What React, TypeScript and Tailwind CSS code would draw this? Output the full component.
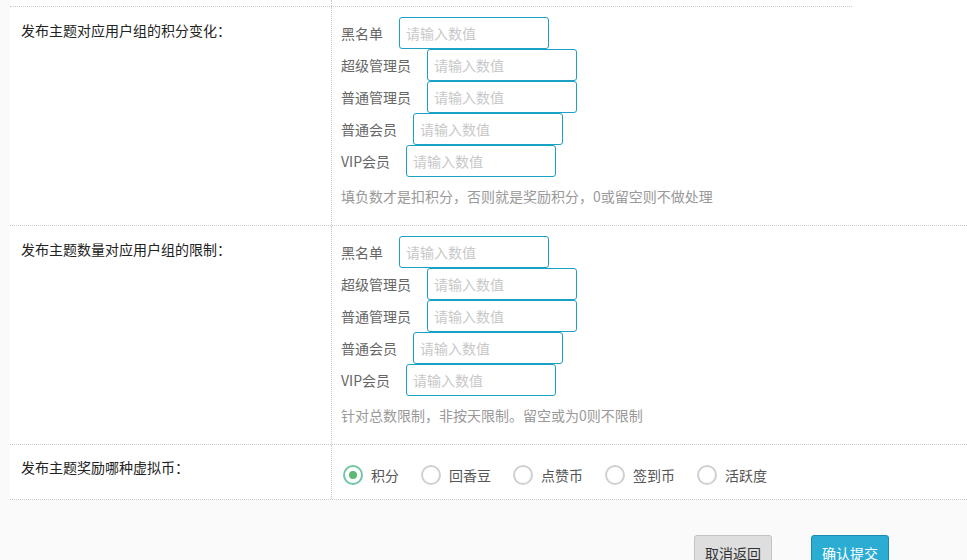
import React from "react";

const groups = [
  { name: "黑名单" },
  { name: "超级管理员" },
  { name: "普通管理员" },
  { name: "普通会员" },
  { name: "VIP会员" },
];

const coins = ["积分", "回香豆", "点赞币", "签到币", "活跃度"];

function GroupInputs({ hint }: { hint: string }) {
  return (
    <div>
      {groups.map((g) => (
        <div key={g.name} className="flex h-8 items-center">
          <span className="mr-4 text-[#666]">{g.name}</span>
          <input
            type="text"
            placeholder="请输入数值"
            className="h-8 w-[150px] rounded-[3px] border border-[#1ba0c6] bg-white px-[6px] text-[14px] outline-none placeholder:text-[#c8c8c8]"
          />
        </div>
      ))}
      <p className="mt-[9px] leading-5 text-[#999]">{hint}</p>
    </div>
  );
}

function Radio({ label, checked }: { label: string; checked?: boolean }) {
  return (
    <label className="mr-[22px] flex items-center gap-2">
      {checked ? (
        <span className="flex h-5 w-5 items-center justify-center rounded-full border-2 border-[#72c6a4]">
          <span className="h-2 w-2 rounded-full bg-[#5cb874]" />
        </span>
      ) : (
        <span className="h-5 w-5 rounded-full border-2 border-[#d0d0d0] bg-white" />
      )}
      <span className="leading-5 text-[#555]">{label}</span>
    </label>
  );
}

function Row({
  label,
  children,
  labelPad = "pt-[9px]",
  bodyPad = "pt-[10px] pb-[19px]",
}: {
  label: string;
  children: React.ReactNode;
  labelPad?: string;
  bodyPad?: string;
}) {
  return (
    <div className="flex border-b border-dotted border-[#c8c8c8]">
      <div
        className={`w-[322px] shrink-0 border-r border-dotted border-[#c8c8c8] pl-[11px] leading-7 text-[#222] ${labelPad}`}
      >
        {label}
      </div>
      <div className={`flex-1 pl-[9px] ${bodyPad}`}>{children}</div>
    </div>
  );
}

export default function App() {
  return (
    <div className="min-h-[560px] overflow-hidden bg-[#fafafa] font-['Noto_Sans_CJK_SC',sans-serif] text-[14px]">
      <div className="ml-[10px] bg-white">
        <div className="flex h-[6px]">
          <div className="w-[322px] border-r border-dotted border-[#c8c8c8]" />
        </div>
        <div className="w-[842px] border-t border-dotted border-[#c8c8c8]" />

        <Row label="发布主题对应用户组的积分变化：">
          <GroupInputs hint="填负数才是扣积分，否则就是奖励积分，0或留空则不做处理" />
        </Row>

        <Row label="发布主题数量对应用户组的限制：">
          <GroupInputs hint="针对总数限制，非按天限制。留空或为0则不限制" />
        </Row>

        <Row
          label="发布主题奖励哪种虚拟币："
          labelPad="pt-[8px]"
          bodyPad="pt-[20px] pb-[14px]"
        >
          <div className="ml-[2px] flex items-center">
            {coins.map((c, i) => (
              <Radio key={c} label={c} checked={i === 0} />
            ))}
          </div>
        </Row>
      </div>

      <div className="flex gap-[39px] pl-[694px] pt-[35px]">
        <button className="h-9 w-[78px] rounded-[3px] border border-[#c2c2c2] bg-[#dedede] text-[#333]">
          取消返回
        </button>
        <button className="h-9 w-[78px] rounded-[3px] border border-[#1b8cb0] bg-[#2badd3] text-white">
          确认提交
        </button>
      </div>
    </div>
  );
}
